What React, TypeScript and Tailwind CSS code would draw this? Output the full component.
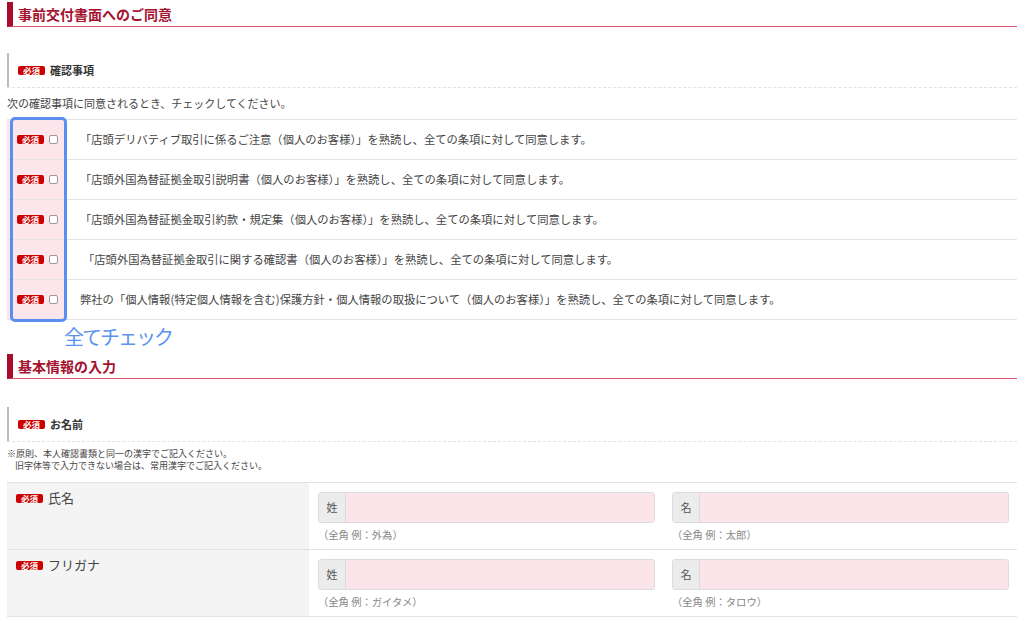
const font = { fontFamily: '"Noto Sans CJK JP", "Noto Sans", sans-serif' };

function Badge() {
  return (
    <span className="inline-flex h-[9px] w-[27px] items-center justify-center rounded-[2px] bg-[#cc0000] text-[8.5px] font-bold leading-none text-white">
      必須
    </span>
  );
}

function SectionTitle({ children }: { children: string }) {
  return (
    <h2 className="flex h-[25px] items-center border-b border-l-[6px] border-b-[#d9566e] border-l-[#a50f2d] pl-[5px] text-[14px] font-bold text-[#a3132f]">
      {children}
    </h2>
  );
}

function SubTitle({ children }: { children: string }) {
  return (
    <div className="h-[35px] border-b border-dashed border-[#e2e2e2]">
      <div className="flex h-full items-center gap-[5px] border-l-2 border-[#bbbbbb] pl-[9px]">
        <Badge />
        <span className="text-[11px] font-bold text-[#333]">{children}</span>
      </div>
    </div>
  );
}

const agreements = [
  "「店頭デリバティブ取引に係るご注意（個人のお客様）」を熟読し、全ての条項に対して同意します。",
  "「店頭外国為替証拠金取引説明書（個人のお客様）」を熟読し、全ての条項に対して同意します。",
  "「店頭外国為替証拠金取引約款・規定集（個人のお客様）」を熟読し、全ての条項に対して同意します。",
  "「店頭外国為替証拠金取引に関する確認書（個人のお客様）」を熟読し、全ての条項に対して同意します。",
  "弊社の「個人情報(特定個人情報を含む)保護方針・個人情報の取扱について（個人のお客様）」を熟読し、全ての条項に対して同意します。",
];

function NameInput({ prefix, hint }: { prefix: string; hint: string }) {
  return (
    <div>
      <div className="flex h-[31px] overflow-hidden rounded-[3px] border border-[#dcdcdc]">
        <span className="flex w-[27px] items-center justify-center border-r border-[#dcdcdc] bg-[#ececec] text-[11px] text-[#555]">
          {prefix}
        </span>
        <span className="flex-1 bg-[#fce5ea]" />
      </div>
      <p className="mt-[4px] text-[10.3px] text-[#888]">{hint}</p>
    </div>
  );
}

const nameRows = [
  { label: "氏名", sei: "（全角 例：外為）", mei: "（全角 例：太郎）" },
  { label: "フリガナ", sei: "（全角 例：ガイタメ）", mei: "（全角 例：タロウ）" },
];

export default function App() {
  return (
    <div className="h-[634px] w-full overflow-hidden bg-white px-[7px] pt-[2px] text-[#333]" style={font}>
      <SectionTitle>事前交付書面へのご同意</SectionTitle>

      <div className="mt-[26px]">
        <SubTitle>確認事項</SubTitle>
      </div>
      <p className="mt-[8px] text-[11px] leading-[14px] text-[#444]">次の確認事項に同意されるとき、チェックしてください。</p>

      <div className="relative mt-[9px] border-t border-[#e4e4e4]">
        {agreements.map((text, i) => (
          <div key={i} className="flex h-[40px] border-b border-[#e4e4e4]">
            <div className="flex w-[59px] items-center gap-[5px] bg-[#fce6ec] pl-[10px]">
              <Badge />
              <span className="h-[9px] w-[9px] rounded-[2px] border border-[#999] bg-white" />
            </div>
            <div className={`flex items-center text-[11.3px] text-[#444] ${i === 3 ? "pl-[17px]" : "pl-[14px]"}`}>{text}</div>
          </div>
        ))}
        <div className="absolute left-[3px] top-[-3px] h-[205px] w-[57px] rounded-[5px] border-[3px] border-[#5a8ff0]" />
      </div>

      <p className="ml-[57px] h-[34px] text-[20px] leading-[34px] tracking-[-2px] text-[#5b93f0]">全てチェック</p>

      <SectionTitle>基本情報の入力</SectionTitle>

      <div className="mt-[28px]">
        <SubTitle>お名前</SubTitle>
      </div>
      <div className="mt-[6px] text-[9px] leading-[12px] text-[#444]">
        <p>※原則、本人確認書類と同一の漢字でご記入ください。</p>
        <p className="pl-[8px]">旧字体等で入力できない場合は、常用漢字でご記入ください。</p>
      </div>

      <div className="mt-[10px] border-t border-[#e2e2e2]">
        {nameRows.map((row) => (
          <div key={row.label} className="flex h-[67px] border-b border-[#e2e2e2]">
            <div className="flex w-[302px] items-start gap-[5px] bg-[#f4f4f4] pl-[9px] pt-[6px]">
              <span className="mt-[5px] flex">
                <Badge />
              </span>
              <span className="text-[13px] leading-[18px] text-[#444]">{row.label}</span>
            </div>
            <div className="grid flex-1 grid-cols-2 gap-[17px] pl-[9px] pr-[8px] pt-[9px]">
              <NameInput prefix="姓" hint={row.sei} />
              <NameInput prefix="名" hint={row.mei} />
            </div>
          </div>
        ))}
      </div>
    </div>
  );
}
